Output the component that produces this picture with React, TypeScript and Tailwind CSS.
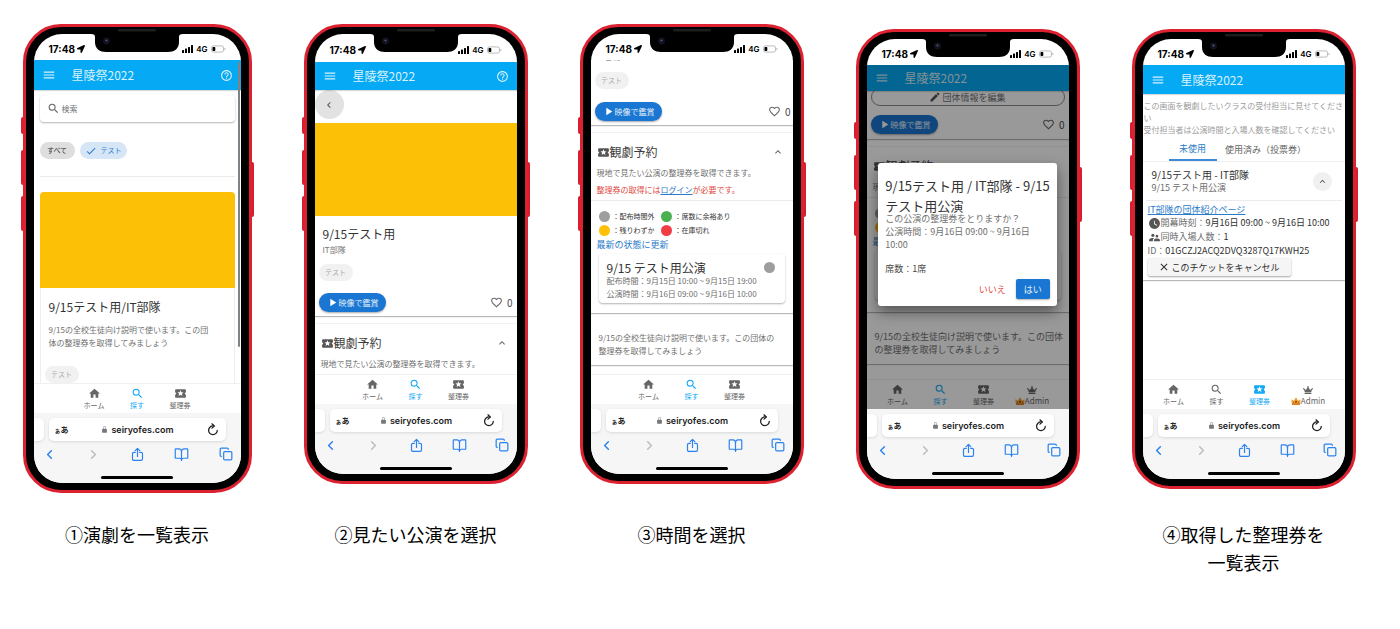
import type { ReactNode } from "react";
import { BookOpen, ChevronLeft, ChevronRight, Copy } from "lucide-react";
import {
  MdCheck,
  MdClose,
  MdEdit,
  MdExpandLess,
  MdFavoriteBorder,
  MdHelpOutline,
  MdHome,
  MdLocalActivity,
  MdMenu,
  MdNavigateBefore,
  MdPlayArrow,
  MdSearch,
  MdSupervisorAccount,
  MdWatchLater,
} from "react-icons/md";
import { FaCrown, FaLocationArrow } from "react-icons/fa";
import { IoLockClosed } from "react-icons/io5";

type Tab = "home" | "search" | "ticket" | "admin";

/* ---------- device ---------- */

function SideButtons() {
  return (
    <>
      <span className="absolute -left-[5px] top-[90px] h-[17px] w-[2px] rounded-l-sm bg-[#d81f2f]" />
      <span className="absolute -left-[5px] top-[123px] h-[35px] w-[2px] rounded-l-sm bg-[#d81f2f]" />
      <span className="absolute -left-[5px] top-[169px] h-[35px] w-[2px] rounded-l-sm bg-[#d81f2f]" />
      <span className="absolute -right-[5px] top-[135px] h-[55px] w-[2px] rounded-r-sm bg-[#d81f2f]" />
    </>
  );
}

function Notch() {
  return (
    <svg
      viewBox="0 0 92 24"
      className="absolute left-1/2 top-[2px] h-6 w-[92px] -translate-x-1/2"
      aria-hidden="true"
    >
      <path d="M0 5C3 5 4 6 4 8V13C4 20 9 23 15 23H77C83 23 88 20 88 13V8C88 6 89 5 92 5Z" fill="#000" />
      <rect x="27" y="0" width="38" height="2.5" rx="1.2" fill="#1d1d1f" />
      <circle cx="15.500" cy="12" r="3.400" fill="#12131f" />
      <circle cx="15.500" cy="11.500" r="1.100" fill="#46557f" />
    </svg>
  );
}

function StatusBar({ tall = false }: { tall?: boolean }) {
  return (
    <div
      className={`flex shrink-0 items-center justify-between px-[15px] font-[Inter,sans-serif] text-black ${
        tall ? "h-7 pt-1" : "h-[26px] pt-1"
      }`}
    >
      <span className="flex items-center gap-[2px] text-[10px] font-bold leading-none">
        17:48
        <FaLocationArrow className="size-[8px]" />
      </span>
      <span className="flex items-center gap-[3px] text-[8px] font-semibold leading-none">
        <svg viewBox="0 0 11 8" className="h-2 w-[11px]" aria-hidden="true">
          <rect x="0" y="5" width="2" height="3" rx=".5" />
          <rect x="3" y="3.500" width="2" height="4.500" rx=".5" />
          <rect x="6" y="2" width="2" height="6" rx=".5" />
          <rect x="9" y="0" width="2" height="8" rx=".5" />
        </svg>
        4G
        <svg viewBox="0 0 15 8" className="h-2 w-[15px]" aria-hidden="true">
          <rect x=".5" y=".9" width="12" height="6.200" rx="2" fill="none" stroke="#a9a9a9" strokeWidth=".8" />
          <rect x="1.500" y="1.900" width="2.800" height="4.200" rx=".8" />
          <path d="M13.500 2.800v2.400c.6-.2 1-.6 1-1.200s-.4-1-1-1.200z" fill="#a9a9a9" />
        </svg>
      </span>
    </div>
  );
}

function ReloadIcon() {
  return (
    <svg
      viewBox="0 0 24 24"
      className="size-[13px]"
      fill="none"
      stroke="currentColor"
      strokeWidth="2.300"
      strokeLinecap="round"
      strokeLinejoin="round"
      aria-hidden="true"
    >
      <path d="M13 5.500a8 8 0 1 0 7.800 8" />
      <path d="M11 1.500l4.500 4-4.500 4" />
    </svg>
  );
}

function ShareIcon() {
  return (
    <svg
      viewBox="0 0 24 24"
      className="size-[15px]"
      fill="none"
      stroke="currentColor"
      strokeWidth="1.900"
      strokeLinecap="round"
      strokeLinejoin="round"
      aria-hidden="true"
    >
      <path d="M8.500 8.500H6.200A2.200 2.200 0 0 0 4 10.700v8.600a2.200 2.200 0 0 0 2.200 2.200h11.600a2.200 2.200 0 0 0 2.200-2.200v-8.600a2.200 2.200 0 0 0-2.200-2.200h-2.300" />
      <path d="M12 15V2.500M8.300 5.800 12 2.200l3.700 3.600" />
    </svg>
  );
}

function SafariBar() {
  return (
    <div className="flex h-[70px] shrink-0 flex-col bg-[#f6f6f7] pt-[5px]">
      <div className="flex h-[23px] gap-[5px] pr-[15px]">
        <span className="w-[10px] rounded-r-[5px] bg-white shadow-[0_1px_3px_rgba(0,0,0,0.12)]" />
        <div className="flex flex-1 items-center justify-between rounded-[5px] bg-white px-[6px] text-[#1c1c1e] shadow-[0_1px_3px_rgba(0,0,0,0.12)]">
          <button type="button" className="flex items-baseline font-bold leading-none">
            <span className="text-[6px]">ぁ</span>
            <span className="text-[8px]">あ</span>
          </button>
          <button
            type="button"
            className="flex items-center gap-[3px] font-[Inter,sans-serif] text-[9px] font-semibold leading-none"
          >
            <IoLockClosed className="size-[7px] text-[#77777a]" />
            seiryofes.com
          </button>
          <button type="button" aria-label="再読み込み">
            <ReloadIcon />
          </button>
        </div>
      </div>
      <div className="flex h-[26px] items-center justify-between px-[8px] text-[#2b82f0]">
        <button type="button" aria-label="戻る">
          <ChevronLeft className="size-[15px]" strokeWidth={2.4} />
        </button>
        <button type="button" aria-label="進む" className="text-[#bcbcc0]">
          <ChevronRight className="size-[15px]" strokeWidth={2.4} />
        </button>
        <button type="button" aria-label="共有">
          <ShareIcon />
        </button>
        <button type="button" aria-label="ブックマーク">
          <BookOpen className="size-[15px]" strokeWidth={1.9} />
        </button>
        <button type="button" aria-label="タブ">
          <Copy className="size-[14px]" strokeWidth={2.1} />
        </button>
      </div>
      <span className="mx-auto mt-[9px] h-[3px] w-[72px] rounded-full bg-black" />
    </div>
  );
}

function Phone({
  large = false,
  tallStatus = false,
  children,
}: {
  large?: boolean;
  tallStatus?: boolean;
  children: ReactNode;
}) {
  return (
    <div
      className={`relative shrink-0 rounded-[38px] border-[3px] border-[#dc2231] bg-black px-2 py-[7px] ${
        large ? "h-[469px] w-[229px]" : "h-[460px] w-[224px]"
      }`}
    >
      <SideButtons />
      <div className="flex h-full flex-col overflow-hidden rounded-[28px] bg-white">
        <StatusBar tall={tallStatus} />
        <div className="relative flex min-h-0 flex-1 flex-col">{children}</div>
        <SafariBar />
      </div>
      <Notch />
    </div>
  );
}

/* ---------- app shell ---------- */

function AppBar({ help = false, height }: { help?: boolean; height: string }) {
  return (
    <header
      className={`relative z-10 flex shrink-0 items-center bg-[#05a9f4] px-[8px] text-[#d9f1fd] shadow-[0_1px_1px_rgba(0,0,0,0.15)] ${height}`}
    >
      <button type="button" aria-label="メニュー">
        <MdMenu className="size-[14px]" />
      </button>
      <h2 className="ml-4 flex-1 text-[12px] leading-none">星陵祭2022</h2>
      {help && (
        <button type="button" aria-label="ヘルプ">
          <MdHelpOutline className="size-[13px]" />
        </button>
      )}
    </header>
  );
}

function CrownEmoji() {
  return (
    <svg viewBox="0 0 10 8" className="h-2 w-[10px]" aria-hidden="true">
      <path d="M.3 2.200 2.800 3.800 5 .3l2.200 3.500 2.500-1.600-.7 5.600H1z" fill="#f0a32c" />
      <path d="M1 6.400h8v1.400H1z" fill="#c96f1b" />
      <circle cx="5" cy="4.800" r="1" fill="#8c3b2a" />
      <circle cx="2.500" cy="5.100" r=".7" fill="#9c4c1f" />
      <circle cx="7.500" cy="5.100" r=".7" fill="#9c4c1f" />
    </svg>
  );
}

function NavItem({
  icon,
  label,
  active,
  wide = false,
}: {
  icon: ReactNode;
  label: ReactNode;
  active: boolean;
  wide?: boolean;
}) {
  return (
    <button
      type="button"
      className={`flex flex-col items-center ${wide ? "w-[54px]" : "w-[43px]"} ${
        active ? "text-[#14a9f4]" : "text-[#666666]"
      }`}
    >
      {icon}
      <span className="flex items-center text-[7px] leading-[10px]">{label}</span>
    </button>
  );
}

function BottomNav({ active, admin = false }: { active: Tab; admin?: boolean }) {
  return (
    <nav className="flex h-[30px] shrink-0 items-center justify-center border-t border-[#f0f0f0] bg-white">
      <NavItem icon={<MdHome className="size-[13px]" />} label="ホーム" active={active === "home"} />
      <NavItem icon={<MdSearch className="size-[13px]" />} label="探す" active={active === "search"} />
      <NavItem
        icon={<MdLocalActivity className="size-[13px]" />}
        label="整理券"
        active={active === "ticket"}
      />
      {admin && (
        <NavItem
          wide
          icon={
            <span className="flex h-[13px] items-center">
              <FaCrown className="size-[10px]" />
            </span>
          }
          label={
            <>
              <CrownEmoji />
              <span className="text-[8px]">Admin</span>
            </>
          }
          active={active === "admin"}
        />
      )}
    </nav>
  );
}

/* ---------- shared pieces ---------- */

const cardShadow = "shadow-[0_1px_1px_rgba(0,0,0,0.28)]";

function Tag() {
  return (
    <span className="flex h-[17px] w-[34px] items-center justify-center rounded-full bg-[#f1f1f1] text-[7px] leading-none text-[#a9a9a9]">
      テスト
    </span>
  );
}

function WatchRow() {
  return (
    <div className="flex items-center justify-between">
      <button
        type="button"
        className="flex h-[19px] w-[67px] items-center justify-center rounded-full bg-[#1976d2] text-[8px] leading-none text-[#e3effa] shadow-[0_1px_2px_rgba(0,0,0,0.35)]"
      >
        <MdPlayArrow className="size-[13px] text-white" />
        映像で鑑賞
      </button>
      <button
        type="button"
        aria-label="お気に入り"
        className="flex items-center gap-1 text-[10px] leading-none text-[#4a4a4a]"
      >
        <MdFavoriteBorder className="size-[13px] text-[#666666]" />0
      </button>
    </div>
  );
}

function BookingHeading() {
  return (
    <>
      <div className="flex h-6 items-center pl-[6px] pr-[9px] text-[#3d3d3d]">
        <MdLocalActivity className="size-[13px] text-[#555555]" />
        <h4 className="flex-1 text-[12px] leading-none">観劇予約</h4>
        <button type="button" aria-label="折りたたむ">
          <MdExpandLess className="size-[12px] text-[#666666]" />
        </button>
      </div>
      <p className="mt-[3px] pl-[6px] text-[8px] leading-3 text-[#6f6f6f]">
        現地で見たい公演の整理券を取得できます。
      </p>
    </>
  );
}

const legend = [
  { color: "bg-[#9e9e9e]", text: "：配布時間外" },
  { color: "bg-[#4caf50]", text: "：席数に余裕あり" },
  { color: "bg-[#ffc107]", text: "：残りわずか" },
  { color: "bg-[#f03d44]", text: "：在庫切れ" },
];

function BookingCard({ loginNote = false }: { loginNote?: boolean }) {
  return (
    <section
      className={`mt-[7px] border-t border-[#f3f3f3] bg-white pt-[7px] ${cardShadow} ${
        loginNote ? "pb-[10px]" : "pb-3"
      }`}
    >
      <BookingHeading />
      {loginNote && (
        <p className="mt-[5px] pl-[6px] text-[8px] leading-3 text-[#e0483e]">
          整理券の取得には
          <a href="#login" className="text-[#2a7bc9] underline">
            ログイン
          </a>
          が必要です。
        </p>
      )}
      <hr className="mt-1 border-[#ebebeb]" />
      <ul className="mt-2 grid grid-cols-[62px_1fr] pl-2 text-[7px] leading-[14px] text-[#333333]">
        {legend.map((item) => (
          <li key={item.text} className="flex items-center gap-[3px]">
            <span className={`size-[11px] rounded-full ${item.color}`} />
            {item.text}
          </li>
        ))}
      </ul>
      <button type="button" className="mt-[1px] block pl-[6px] text-[9px] leading-[14px] text-[#2a7bc9]">
        最新の状態に更新
      </button>
      <div className="mt-[2px] flex px-2">
        <button
          type="button"
          className="flex flex-1 items-start justify-between rounded-sm bg-white pb-[3px] pl-[8px] pr-[10px] pt-2 text-left shadow-[0_1px_2px_rgba(0,0,0,0.3)]"
        >
          <span className="flex flex-col">
            <span className="text-[12px] leading-3 text-[#333333]">9/15 テスト用公演</span>
            <span className="text-[8px] leading-[13px] text-[#6f6f6f]">
              配布時間：9月15日 10:00 ~ 9月15日 19:00
            </span>
            <span className="text-[8px] leading-[13px] text-[#6f6f6f]">
              公演時間：9月16日 09:00 ~ 9月16日 10:00
            </span>
          </span>
          <span className="size-[11px] rounded-full bg-[#9e9e9e]" />
        </button>
      </div>
    </section>
  );
}

function DescriptionCard({ size, children }: { size: string; children: ReactNode }) {
  return (
    <section
      className={`mt-2 whitespace-nowrap bg-white pb-2 pl-2 pt-[10px] leading-[13px] text-[#6f6f6f] ${size} ${cardShadow}`}
    >
      {children}
    </section>
  );
}

/* ---------- screens ---------- */

function ListScreen() {
  return (
    <>
      <AppBar help height="h-[30px]" />
      <span className="absolute right-[1px] top-[2px] z-20 h-[285px] w-[2px] rounded-full bg-[#7d8386]" />
      <main className="min-h-0 flex-1 overflow-hidden px-[6px] pt-[5px]">
        <label className="flex h-[27px] items-center gap-[2px] rounded-sm bg-white pl-[7px] shadow-[0_1px_2px_rgba(0,0,0,0.3)]">
          <MdSearch className="size-[13px] text-[#666666]" />
          <input
            type="search"
            aria-label="検索"
            placeholder="検索"
            className="min-w-0 flex-1 bg-transparent text-[8px] leading-3 outline-none placeholder:text-[#757575]"
          />
        </label>
        <div className="mt-5 flex gap-[5px] text-[7px] leading-none">
          <button type="button" className="h-[17px] w-[35px] rounded-full bg-[#dedede] text-[#333333]">
            すべて
          </button>
          <button
            type="button"
            className="flex h-[17px] w-[47px] items-center justify-center gap-1 rounded-full bg-[#d6e6f7] text-[#2d7dd2]"
          >
            <MdCheck className="size-[12px]" />
            テスト
          </button>
        </div>
        <hr className="mt-[17px] border-[#ebebeb]" />
        <article className="mt-[15px] h-[240px] rounded-sm border border-[#eeeeee]">
          <div className="-mx-px -mt-px h-24 rounded-t-sm bg-[#fcc107]" />
          <h3 className="mt-[10px] px-2 text-[12px] leading-[18px] text-[#333333]">9/15テスト用/IT部隊</h3>
          <p className="mt-[7px] px-2 text-[8px] leading-[13px] text-[#6f6f6f]">
            9/15の全校生徒向け説明で使います。この団
            <br />
            体の整理券を取得してみましょう
          </p>
          <div className="mt-[17px] pl-1">
            <Tag />
          </div>
        </article>
      </main>
      <BottomNav active="search" />
    </>
  );
}

function DetailScreen() {
  return (
    <>
      <AppBar help height="h-[28px]" />
      <main className="min-h-0 flex-1 overflow-hidden">
        <button
          type="button"
          aria-label="前の画面へ"
          className="flex size-[29px] items-center justify-center rounded-full bg-[#e2e2e2] text-[#555555]"
        >
          <MdNavigateBefore className="size-[12px]" />
        </button>
        <section className={`mt-[4px] bg-white pb-1 ${cardShadow}`}>
          <div className="h-[93px] bg-[#fcc107]" />
          <h3 className="mt-[9px] pl-2 text-[12px] leading-[18px] text-[#333333]">9/15テスト用</h3>
          <p className="mt-[1px] pl-2 text-[8px] leading-3 text-[#757575]">IT部隊</p>
          <div className="mt-2 pl-1">
            <Tag />
          </div>
          <div className="mt-3 px-1">
            <WatchRow />
          </div>
        </section>
        <section className="mt-[7px] border-t border-[#f3f3f3] bg-white pt-[7px]">
          <BookingHeading />
        </section>
      </main>
      <BottomNav active="search" />
    </>
  );
}

function TimeScreen() {
  return (
    <>
      <main className="min-h-0 flex-1 overflow-hidden">
        <section className={`-mt-[9px] bg-white pb-1 ${cardShadow}`}>
          <p className="pl-2 text-[8px] leading-3 text-[#757575]">IT部隊</p>
          <div className="mt-[9px] pl-1">
            <Tag />
          </div>
          <div className="mt-[13px] pl-1 pr-[2px]">
            <WatchRow />
          </div>
        </section>
        <BookingCard loginNote />
        <DescriptionCard size="text-[8px]">
          9/15の全校生徒向け説明で使います。この団体の
          <br />
          整理券を取得してみましょう
        </DescriptionCard>
      </main>
      <BottomNav active="search" />
    </>
  );
}

function ConfirmScreen() {
  return (
    <>
      <AppBar height="h-[26px]" />
      <main className="min-h-0 flex-1 overflow-hidden">
        <section className={`-mt-[3px] bg-white px-1 pb-[5px] ${cardShadow}`}>
          <button
            type="button"
            className="flex h-[18px] w-full items-center justify-center gap-[1px] rounded-full border border-[#8a8a8a] text-[9px] leading-none text-[#6f6f6f]"
          >
            <MdEdit className="size-[12px] text-[#555555]" />
            団体情報を編集
          </button>
          <div className="mt-[9px]">
            <WatchRow />
          </div>
        </section>
        <BookingCard />
        <DescriptionCard size="text-[9px]">
          9/15の全校生徒向け説明で使います。この団体
          <br />
          の整理券を取得してみましょう
        </DescriptionCard>
      </main>
      <BottomNav active="search" admin />
      <div className="absolute inset-0 z-20 flex items-start justify-center bg-black/40 pt-[98px]">
        <div
          role="dialog"
          aria-labelledby="confirm-title"
          className="mx-[13px] flex-1 rounded-[3px] bg-white px-[7px] pb-[7px] pt-[13px] shadow-[0_6px_14px_rgba(0,0,0,0.45)]"
        >
          <h3 id="confirm-title" className="whitespace-nowrap text-[13px] leading-5 text-[#333333]">
            9/15テスト用 / IT部隊 - 9/15
            <br />
            テスト用公演
          </h3>
          <p className="-mt-1 whitespace-nowrap text-[9px] leading-[13px] text-[#6f6f6f]">
            この公演の整理券をとりますか？
            <br />
            公演時間：9月16日 09:00 ~ 9月16日
            <br />
            10:00
          </p>
          <p className="mt-[11px] text-[9px] leading-[13px] text-[#444444]">席数：1席</p>
          <div className="mt-1 flex items-center justify-end gap-[10px] text-[9px] leading-none">
            <button type="button" className="text-[#e0483e]">
              いいえ
            </button>
            <button
              type="button"
              className="h-5 w-[34px] rounded-[2px] bg-[#1976d2] text-[#e3effa] shadow-[0_1px_2px_rgba(0,0,0,0.3)]"
            >
              はい
            </button>
          </div>
        </div>
      </div>
    </>
  );
}

function TicketsScreen() {
  return (
    <>
      <AppBar height="h-[29px]" />
      <main className="min-h-0 flex-1 overflow-hidden">
        <p className="mt-[6px] whitespace-nowrap pl-[1px] text-[8px] leading-3 text-[#9c9c9c]">
          この画面を観劇したいクラスの受付担当に見せてくださ
          <br />
          い
          <br />
          受付担当者は公演時間と入場人数を確認してください
        </p>
        <div role="tablist" className="flex justify-center pr-1 pt-[1px] text-[9px] leading-none">
          <button
            type="button"
            role="tab"
            aria-selected="true"
            className="h-6 w-12 border-b-2 border-[#3d8ad8] text-[#2a7bc9]"
          >
            未使用
          </button>
          <button type="button" role="tab" aria-selected="false" className="h-6 w-[98px] text-[#666666]">
            使用済み（投票券）
          </button>
        </div>
        <article className={`border-t border-[#eeeeee] bg-white pb-[4px] ${cardShadow}`}>
          <div className="flex items-center justify-between pb-[6px] pl-[9px] pr-[13px] pt-[6px]">
            <div>
              <h3 className="text-[10px] leading-[13px] text-[#333333]">9/15テスト用 - IT部隊</h3>
              <p className="text-[9px] leading-[13px] text-[#6b6b6b]">9/15 テスト用公演</p>
            </div>
            <button
              type="button"
              aria-label="詳細を閉じる"
              className="flex size-[19px] items-center justify-center rounded-full bg-[#f0f0f0] text-[#555555]"
            >
              <MdExpandLess className="size-[11px]" />
            </button>
          </div>
          <hr className="mx-[3px] border-[#ebebeb]" />
          <div className="mt-[2px] px-[5px] text-[9px] leading-[14px] text-[#6b6b6b]">
            <a href="#group" className="block leading-[13px] text-[#2a7bc9] underline">
              IT部隊の団体紹介ページ
            </a>
            <p className="flex items-center whitespace-nowrap">
              <MdWatchLater className="size-[13px] text-[#555555]" />
              開幕時刻：<span className="text-[#2f2f2f]">9月16日 09:00 ~ 9月16日 10:00</span>
            </p>
            <p className="flex items-center">
              <MdSupervisorAccount className="size-[13px] text-[#555555]" />
              同時入場人数：<span className="text-[#2f2f2f]">1</span>
            </p>
            <p>
              ID：<span className="text-[#2f2f2f]">01GCZJ2ACQ2DVQ3287Q17KWH25</span>
            </p>
            <button
              type="button"
              className="flex h-[18px] w-[143px] items-center justify-center gap-[1px] rounded-[2px] bg-[#f5f5f5] leading-none text-[#2f2f2f] shadow-[0_1px_2px_rgba(0,0,0,0.35)]"
            >
              <MdClose className="size-[12px]" />
              このチケットをキャンセル
            </button>
          </div>
        </article>
      </main>
      <BottomNav active="ticket" admin />
    </>
  );
}

/* ---------- page ---------- */

function Step({ lowered = false, caption, children }: { lowered?: boolean; caption?: ReactNode; children: ReactNode }) {
  return (
    <figure className={`flex flex-col ${lowered ? "pt-[5px]" : ""}`}>
      {children}
      <figcaption className="mt-auto min-h-[84px] pt-[27px] text-center text-[18px] leading-7 text-black">
        {caption}
      </figcaption>
    </figure>
  );
}

export default function App() {
  return (
    <div
      lang="ja"
      className="min-h-screen bg-white pt-6 font-['Noto_Sans_CJK_JP',sans-serif]"
    >
      <div className="flex justify-center gap-[52px] pr-[22px]">
        <Step caption="①演劇を一覧表示">
          <Phone large>
            <ListScreen />
          </Phone>
        </Step>
        <Step caption="②見たい公演を選択">
          <Phone tallStatus>
            <DetailScreen />
          </Phone>
        </Step>
        <Step caption="③時間を選択">
          <Phone>
            <TimeScreen />
          </Phone>
        </Step>
        <Step lowered>
          <Phone>
            <ConfirmScreen />
          </Phone>
        </Step>
        <Step
          lowered
          caption={
            <>
              ④取得した整理券を
              <br />
              一覧表示
            </>
          }
        >
          <Phone>
            <TicketsScreen />
          </Phone>
        </Step>
      </div>
    </div>
  );
}
